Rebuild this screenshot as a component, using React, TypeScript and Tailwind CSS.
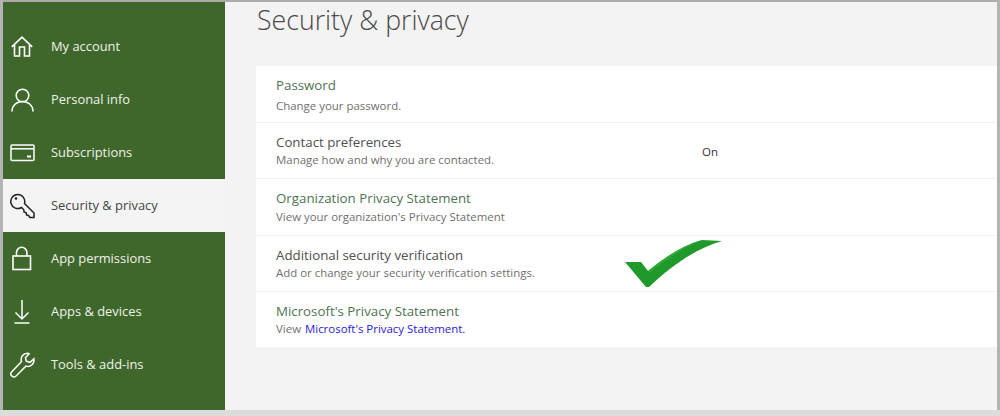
import React from "react";

function Home() {
  return (
    <svg width="22" height="21" viewBox="0 0 22 21" fill="none" stroke="#fff" strokeWidth="1.6">
      <path d="M.8 10.800 11 1.200l10.200 9.600M3.500 8.500V20h5v-9h5v9h5V8.500" />
    </svg>
  );
}
function Person() {
  return (
    <svg width="23" height="24" viewBox="0 0 23 24" fill="none" stroke="#fff" strokeWidth="1.6">
      <circle cx="11.500" cy="7.500" r="6.300" />
      <path d="M1 23.500c0-6 4.500-10 10.500-10s10.500 4 10.500 10" />
    </svg>
  );
}
function Card() {
  return (
    <svg width="25" height="18" viewBox="0 0 25 18" fill="none" stroke="#fff" strokeWidth="1.5">
      <rect x="1" y="1" width="23" height="15.500" rx="1" />
      <path d="M1 4.800h23" />
      <path d="M17 12.500h4" strokeWidth="2" />
    </svg>
  );
}
function Key() {
  return (
    <svg width="25" height="26" viewBox="0 0 25 26" fill="none" stroke="#222" strokeWidth="1.5">
      <path d="M11.500 14.500A7 7 0 1 1 14.500 10.500L24 20v4.500h-4l-1.500-2-2-.5-.300-2.300-2.200-.7-.200-2.200z" />
      <circle cx="6" cy="5.500" r="1.300" fill="#222" stroke="none" />
    </svg>
  );
}
function Lock() {
  return (
    <svg width="20" height="25" viewBox="0 0 20 25" fill="none" stroke="#fff" strokeWidth="1.6">
      <rect x="1" y="10" width="17.500" height="13.500" />
      <path d="M4.500 10V6.500a5.200 5.200 0 0 1 10.400 0V10" />
    </svg>
  );
}
function Download() {
  return (
    <svg width="16" height="25" viewBox="0 0 16 25" fill="none" stroke="#fff" strokeWidth="1.5">
      <path d="M8 1v19M1.500 13.500 8 20l6.500-6.500M.5 24h15" />
    </svg>
  );
}
function Wrench() {
  return (
    <svg width="25" height="26" viewBox="0 0 25 26" fill="none" stroke="#fff" strokeWidth="1.5">
      <path d="M17.500 1.200a6.300 6.300 0 0 0-6 8.300L1.800 19.700a3 3 0 0 0 4.300 4.300l9.800-9.900a6.300 6.300 0 0 0 8-7.400l-3.700 3.600-3.800-1-1-3.700 3.800-3.800a6.300 6.300 0 0 0-1.700-.6z" />
    </svg>
  );
}
function Check() {
  return (
    <svg width="98" height="47" viewBox="0 0 98 47" className="absolute left-[625px] top-[240px]">
      <path d="M0 22h16l7 9C40 17 58 5 77 0l20 1C72 8 47 25 24 47h-3z" fill="#1f9a2a" />
      <path d="M16 22l7 9C40 17 58 5 77 0 60 7 40 20 24 33z" fill="#3eb03f" opacity="0.6" />
    </svg>
  );
}

const nav = [
  { label: "My account", icon: <Home /> },
  { label: "Personal info", icon: <Person /> },
  { label: "Subscriptions", icon: <Card /> },
  { label: "Security & privacy", icon: <Key />, active: true },
  { label: "App permissions", icon: <Lock /> },
  { label: "Apps & devices", icon: <Download /> },
  { label: "Tools & add-ins", icon: <Wrench /> },
];

const rows = [
  { title: "Password", titleCls: "text-[#4f7355]", sub: <>Change your password.</>, h: "h-[57px]", gap: "mt-[4px]" },
  { title: "Contact preferences", titleCls: "text-[#505050]", sub: <>Manage how and why you are contacted.</>, h: "h-[56px]", gap: "mt-[1px]", right: "On" },
  { title: "Organization Privacy Statement", titleCls: "text-[#4f7355]", sub: <>View your organization's Privacy Statement</>, h: "h-[57px]", gap: "mt-[2px]" },
  { title: "Additional security verification", titleCls: "text-[#505050]", sub: <>Add or change your security verification settings.</>, h: "h-[56px]", gap: "mt-[1px]" },
  { title: "Microsoft's Privacy Statement", titleCls: "text-[#4f7355]", sub: <>View <span className="ml-[1px] text-[#2a20d8]">Microsoft's Privacy Statement.</span></>, h: "h-[55px]", gap: "mt-[1px]" },
];

export default function App() {
  return (
    <div className="relative w-[1000px] h-[416px] bg-[#dcdcdc] overflow-hidden font-['Open_Sans','Noto_Sans',sans-serif]">
      <div className="absolute inset-x-0 top-0 h-[2px] bg-[#ababab]" />
      <div className="absolute left-0 top-0 h-[410px] w-[3px] bg-[#b4b4b4]" />
      <div className="absolute right-0 top-0 h-[410px] w-[3px] bg-[#b4b4b4]" />
      <div className="flex h-[408px] mt-[2px] mx-[3px] bg-[#f3f3f3]">
        <aside className="w-[222px] shrink-0 flex flex-col">
          <div className="h-[18px] bg-[#3f672b]" />
          {nav.map((n) => (
            <div
              key={n.label}
              className={`h-[53px] flex items-center ${n.active ? "bg-[#f4f4f4] text-[#454545]" : "bg-[#3f672b] text-[#eef2ea]"}`}
            >
              <div className="w-[48px] flex justify-center pr-[10px]">{n.icon}</div>
              <span className="text-[12.900px] leading-none">{n.label}</span>
            </div>
          ))}
          <div className="flex-1 bg-[#3f672b]" />
        </aside>
        <main className="flex-1 pl-[32px]">
          <h1 className="text-[26.700px] font-light text-[#4a4a4a] leading-none mt-[5px] h-[59px]">Security &amp; privacy</h1>
          <div className="bg-white -ml-[1px]">
            {rows.map((r, i) => (
              <div
                key={r.title}
                className={`relative pl-[20px] pt-[10px] ${r.h} ${i < rows.length - 1 ? "border-b border-[#f1f1f1]" : ""}`}
              >
                <div className={`text-[13.300px] leading-[18px] ${r.titleCls}`}>{r.title}</div>
                <div className={`text-[11.450px] leading-[16px] text-[#6f6f6f] ${r.gap}`}>{r.sub}</div>
                {r.right && <span className="absolute left-[446px] top-[21px] text-[11.500px] leading-[16px] text-[#333]">{r.right}</span>}
              </div>
            ))}
          </div>
        </main>
      </div>
      <Check />
    </div>
  );
}
